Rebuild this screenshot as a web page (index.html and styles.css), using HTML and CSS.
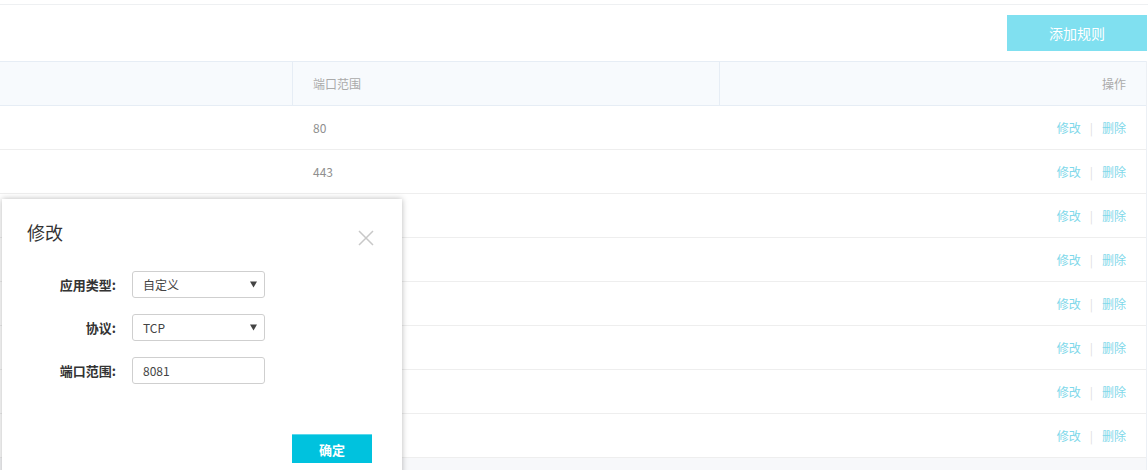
FILE: index.html
```html
<!DOCTYPE html>
<html lang="zh">
<head>
<meta charset="utf-8">
<link rel="stylesheet" href="styles.css">
</head>
<body>
<div class="page">
  <div class="topline"></div>
  <div class="toolbar">
    <button class="btn-add">添加规则</button>
  </div>
  <div class="table">
    <div class="row head">
      <div class="cell c1"></div>
      <div class="cell c2">端口范围</div>
      <div class="cell c3">操作</div>
    </div>
    <div class="row"><div class="cell c1"></div><div class="cell c2 num">80</div><div class="cell c3"><span class="act">修改</span><span class="sep">|</span><span class="act">删除</span></div></div>
    <div class="row"><div class="cell c1"></div><div class="cell c2 num">443</div><div class="cell c3"><span class="act">修改</span><span class="sep">|</span><span class="act">删除</span></div></div>
    <div class="row"><div class="cell c1"></div><div class="cell c2 num"></div><div class="cell c3"><span class="act">修改</span><span class="sep">|</span><span class="act">删除</span></div></div>
    <div class="row"><div class="cell c1"></div><div class="cell c2 num"></div><div class="cell c3"><span class="act">修改</span><span class="sep">|</span><span class="act">删除</span></div></div>
    <div class="row"><div class="cell c1"></div><div class="cell c2 num"></div><div class="cell c3"><span class="act">修改</span><span class="sep">|</span><span class="act">删除</span></div></div>
    <div class="row"><div class="cell c1"></div><div class="cell c2 num"></div><div class="cell c3"><span class="act">修改</span><span class="sep">|</span><span class="act">删除</span></div></div>
    <div class="row"><div class="cell c1"></div><div class="cell c2 num"></div><div class="cell c3"><span class="act">修改</span><span class="sep">|</span><span class="act">删除</span></div></div>
    <div class="row"><div class="cell c1"></div><div class="cell c2 num"></div><div class="cell c3"><span class="act">修改</span><span class="sep">|</span><span class="act">删除</span></div></div>
    <div class="foot"></div>
  </div>

  <div class="modal">
    <div class="modal-head">
      <span class="modal-title">修改</span>
      <svg class="close" width="16" height="16" viewBox="0 0 16 16"><path d="M1 1L15 15M15 1L1 15" stroke="#c8c8c8" stroke-width="1.5" fill="none"/></svg>
    </div>
    <div class="form">
      <div class="frow">
        <label class="flabel">应用类型:</label>
        <div class="field select"><span>自定义</span><svg class="arrow" width="7" height="7" viewBox="0 0 7 7"><path d="M0 0.5H7L3.5 6.5Z" fill="#444"/></svg></div>
      </div>
      <div class="frow">
        <label class="flabel">协议:</label>
        <div class="field select"><span>TCP</span><svg class="arrow" width="7" height="7" viewBox="0 0 7 7"><path d="M0 0.5H7L3.5 6.5Z" fill="#444"/></svg></div>
      </div>
      <div class="frow">
        <label class="flabel">端口范围:</label>
        <div class="field"><span>8081</span></div>
      </div>
    </div>
    <div class="modal-foot">
      <button class="btn-ok">确定</button>
    </div>
  </div>
</div>
</body>
</html>
```

FILE: styles.css
```css
* { box-sizing: border-box; }
html, body { margin: 0; padding: 0; background: #fff; }
body {
  font-family: "Noto Sans CJK SC", "Noto Sans", sans-serif;
  font-size: 12px;
  color: #999;
  width: 1148px;
  height: 470px;
  overflow: hidden;
}
.page { position: relative; width: 1148px; height: 470px; }
.topline { height: 5px; border-bottom: 1px solid #eef0f2; }
.toolbar {
  display: flex;
  justify-content: flex-end;
  padding: 10px 1px 0 0;
  height: 56px;
}
.btn-add {
  width: 140px;
  height: 36px;
  border: 0;
  background: #80e0f0;
  color: #fff;
  font-family: inherit;
  font-size: 14px;
  padding: 0;
}
.table { width: 1147px; border-right: 1px solid #ecf0f5; }
.row {
  display: flex;
  height: 44px;
  border-bottom: 1px solid #eeeeee;
}
.row.head {
  height: 45px;
  background: #f7fafd;
  border-top: 1px solid #e6edf5;
  border-bottom: 1px solid #e6edf5;
  color: #aaa;
}
.cell { display: flex; align-items: center; height: 100%; }
.c1 { width: 292px; }
.c2 { width: 427px; padding-left: 21px; }
.c3 { flex: 1; justify-content: flex-end; padding-right: 20px; }
.head .c2 { border-left: 1px solid #e6edf5; padding-left: 20px; }
.head .c3 { border-left: 1px solid #e6edf5; }
.num { color: #8f8f8f; }
.act { color: #80d8ea; }
.sep { color: #e0e0e0; margin: 0 9px; }
.foot { height: 14px; background: #f7f8fa; }

.modal {
  position: absolute;
  left: 2px;
  top: 199px;
  width: 400px;
  height: 290px;
  background: #fff;
  box-shadow: 0 0 6px rgba(0,0,0,0.28);
  color: #333;
}
.modal-head {
  display: flex;
  justify-content: space-between;
  align-items: center;
  padding: 10px 28px 0 25px;
  height: 56px;
}
.modal-title { font-size: 18px; color: #333; }
.close { display: block; margin-top: 12px; }
.form {
  display: flex;
  flex-direction: column;
  gap: 16px;
  padding-top: 16px;
}
.frow { display: flex; align-items: center; }
.flabel {
  width: 114px;
  text-align: right;
  font-size: 13px;
  font-weight: bold;
  color: #333;
  margin-right: 16px;
}
.field {
  width: 133px;
  height: 27px;
  border: 1px solid #cfcfcf;
  border-radius: 3px;
  display: flex;
  align-items: center;
  justify-content: space-between;
  padding: 0 7px 0 10px;
  font-size: 12px;
  color: #444;
}
.arrow { display: block; }
.modal-foot {
  display: flex;
  justify-content: flex-end;
  padding: 50px 30px 0 0;
}
.btn-ok {
  width: 80px;
  height: 29px;
  border: 0;
  border-top: 1px solid #5ad8ec;
  background: #00c2de;
  color: #fff;
  font-family: inherit;
  font-size: 13px;
  font-weight: bold;
  padding: 0;
}
```
